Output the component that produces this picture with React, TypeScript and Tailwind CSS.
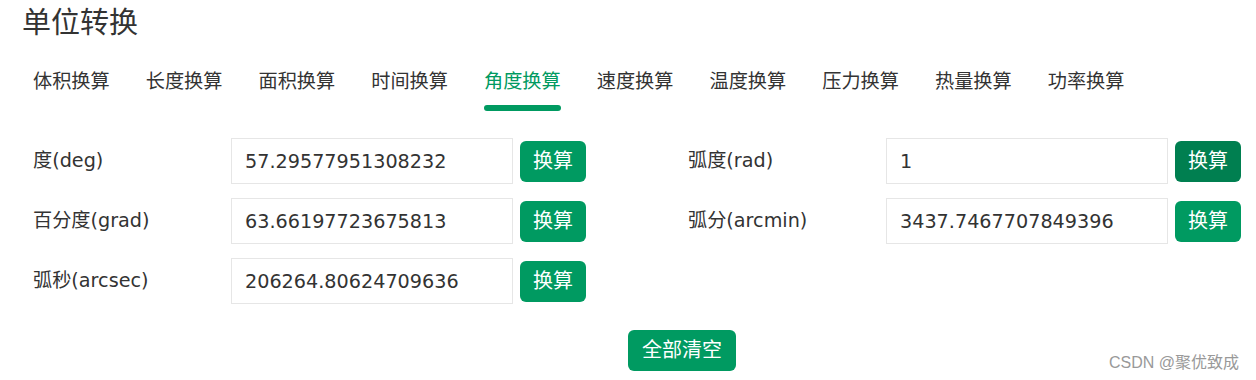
import React from "react";

const tabs = ["体积换算", "长度换算", "面积换算", "时间换算", "角度换算", "速度换算", "温度换算", "压力换算", "热量换算", "功率换算"];

type Field = { label: string; value: string; dark?: boolean };

const left: Field[] = [
  { label: "度(deg)", value: "57.29577951308232" },
  { label: "百分度(grad)", value: "63.66197723675813" },
  { label: "弧秒(arcsec)", value: "206264.80624709636" },
];
const right: Field[] = [
  { label: "弧度(rad)", value: "1", dark: true },
  { label: "弧分(arcmin)", value: "3437.7467707849396" },
];

function Row({ f }: { f: Field }) {
  return (
    <div className="flex items-center h-[46px]">
      <div className="w-[198px] text-[19.2px] text-[#333]">{f.label}</div>
      <input
        readOnly
        value={f.value}
        className="w-[282px] h-[46px] border border-[#e6e6e6] pl-[13px] text-[19.2px] text-[#333] outline-none bg-white"
        style={{ fontFamily: "inherit" }}
      />
      <button
        className={
          "ml-[7px] w-[66px] h-[41px] rounded-[6px] text-white text-[20px] leading-[41px] " +
          (f.dark ? "bg-[#007f50]" : "bg-[#009a61]")
        }
      >
        换算
      </button>
    </div>
  );
}

export default function App() {
  return (
    <div
      className="relative w-[1256px] h-[380px] bg-white overflow-hidden"
      style={{ fontFamily: '"DejaVu Sans", "Noto Sans CJK SC", sans-serif' }}
    >
      <div className="pl-[22px] h-[40px] leading-[40px] text-[29px] text-[#333]" style={{ fontFamily: '"Noto Sans CJK SC", sans-serif' }}>
        单位转换
      </div>
      <div className="flex gap-[36px] pl-[33px] mt-[22px]">
        {tabs.map((t, i) => (
          <div key={t} className="inline-flex flex-col">
            <div className={"leading-[40px] text-[19.2px] " + (i === 4 ? "text-[#009a61]" : "text-[#333]")}>{t}</div>
            <div className={"mt-[3px] h-[6px] rounded-full " + (i === 4 ? "bg-[#009a61]" : "bg-transparent")} />
          </div>
        ))}
      </div>
      <div className="grid grid-cols-[655px_655px] pl-[33px] mt-[27px]">
        <div className="flex flex-col gap-[14px]">
          {left.map((f) => (
            <Row key={f.label} f={f} />
          ))}
        </div>
        <div className="flex flex-col gap-[14px]">
          {right.map((f) => (
            <Row key={f.label} f={f} />
          ))}
        </div>
      </div>
      <div className="mt-[26px] pl-[628px]">
        <button className="w-[108px] h-[41px] rounded-[6px] bg-[#009a61] text-white text-[20px] leading-[41px]">全部清空</button>
      </div>
      <div
        className="absolute right-[17px] top-[353px] leading-[20px] text-[16px] text-[#999]"
        style={{ fontFamily: '"Liberation Sans", "Noto Sans CJK SC", sans-serif' }}
      >
        CSDN @聚优致成
      </div>
    </div>
  );
}
